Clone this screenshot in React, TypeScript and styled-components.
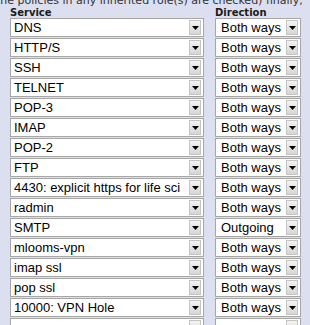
import { FC } from 'react'
import styled, { createGlobalStyle } from 'styled-components'

const services = [
  { name: 'DNS', dir: 'Both ways' },
  { name: 'HTTP/S', dir: 'Both ways' },
  { name: 'SSH', dir: 'Both ways' },
  { name: 'TELNET', dir: 'Both ways' },
  { name: 'POP-3', dir: 'Both ways' },
  { name: 'IMAP', dir: 'Both ways' },
  { name: 'POP-2', dir: 'Both ways' },
  { name: 'FTP', dir: 'Both ways' },
  { name: '4430: explicit https for life sci', dir: 'Both ways' },
  { name: 'radmin', dir: 'Both ways' },
  { name: 'SMTP', dir: 'Outgoing' },
  { name: 'mlooms-vpn', dir: 'Both ways' },
  { name: 'imap ssl', dir: 'Both ways' },
  { name: 'pop ssl', dir: 'Both ways' },
  { name: '10000: VPN Hole', dir: 'Both ways' },
  { name: '', dir: '' },
]

const Select: FC<{ value: string; pad: number }> = ({ value, pad }) => (
  <SelectBox $pad={pad}>
    <Value>{value}</Value>
    <ArrowButton>
      <svg width="7" height="4" viewBox="0 0 7 4">
        <path d="M0 0h7L3.5 4z" fill="#000" />
      </svg>
    </ArrowButton>
  </SelectBox>
)

const App: FC = () => {
  return (
    <Page>
      <GlobalStyle />
      <Intro>the policies in any inherited role(s) are checked) finally,</Intro>
      <Table>
        <Heading>Service</Heading>
        <Heading>Direction</Heading>
        {services.map((s, i) => [
          <Select key={`s${i}`} value={s.name} pad={3} />,
          <Select key={`d${i}`} value={s.dir} pad={5} />,
        ])}
      </Table>
    </Page>
  )
}

const GlobalStyle = createGlobalStyle`
  html, body {
    margin: 0;
    background: #dcdff0;
    overflow: hidden;
  }
`

const Page = styled.div`
  padding-left: 10px;
  width: 310px;
  height: 325px;
  box-sizing: border-box;
  overflow: hidden;
`

const Intro = styled.div`
  margin: -6px 0 0 -14px;
  font-family: 'DejaVu Sans', Verdana, sans-serif;
  font-size: 11px;
  line-height: 13px;
  color: #333;
  white-space: nowrap;
`

const Table = styled.div`
  display: grid;
  grid-template-columns: 194px 86px;
  column-gap: 11px;
  row-gap: 1px;
`

const Heading = styled.div`
  font-family: 'DejaVu Sans', Verdana, sans-serif;
  font-weight: bold;
  font-size: 10px;
  line-height: 11px;
  height: 10px;
  color: #1a1a1a;
`

const SelectBox = styled.div<{ $pad: number }>`
  display: flex;
  align-items: center;
  height: 19px;
  box-sizing: border-box;
  border: 1px solid #a7a7a7;
  background: #fff;
  padding-left: ${({ $pad }) => $pad}px;
  font-family: 'Liberation Sans', Arial, sans-serif;
  font-size: 13px;
  line-height: 15px;
  color: #000;
  overflow: hidden;
`

const Value = styled.span`
  flex: 1;
  min-width: 0;
  overflow: hidden;
  white-space: nowrap;
`

const ArrowButton = styled.span`
  flex: none;
  display: flex;
  align-items: center;
  justify-content: center;
  width: 12px;
  height: 15px;
  margin: 0 2px 0 2px;
  box-sizing: border-box;
  border: 1px solid #c4c4c4;
  background: linear-gradient(#f4f4f4, #d6d6d6);
`

export default App
